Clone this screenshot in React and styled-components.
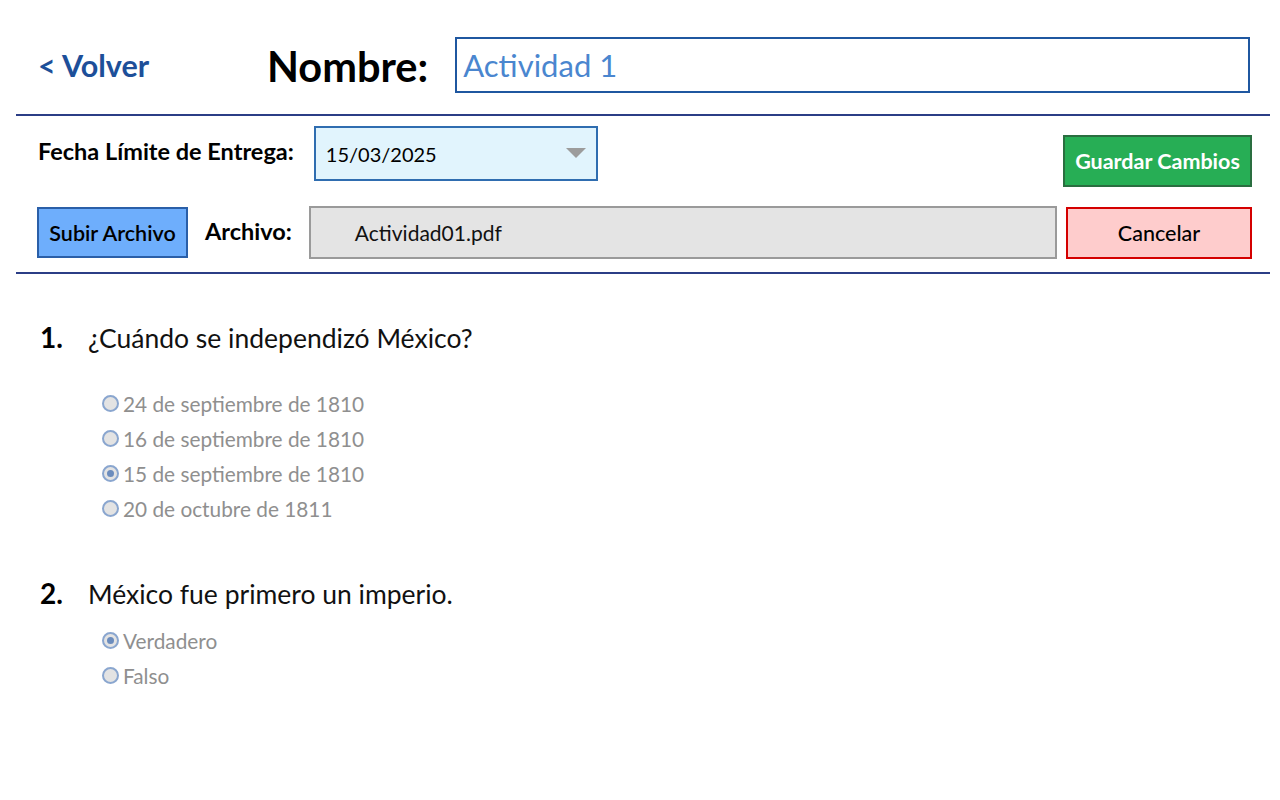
import React from 'react';
import styled, { createGlobalStyle } from 'styled-components';

const GlobalStyle = createGlobalStyle`
  body {
    margin: 0;
    background: #ffffff;
    font-family: Lato, "Noto Sans", "Liberation Sans", sans-serif;
  }
`;

const StyledPage = styled.div`
  padding: 0 10px 0 16px;
`;

const StyledHeader = styled.header`
  display: flex;
  align-items: center;
  padding: 37px 20px 21px 24px;
  border-bottom: 2px solid #2b3d86;
`;

const StyledBackLink = styled.a`
  width: 229px;
  margin-left: -2px;
  color: #1d4f99;
  font-size: 30.5px;
  font-weight: 700;
  text-decoration: none;
`;

const StyledNameLabel = styled.h1`
  margin: 0 27px 0 0;
  font-size: 41.5px;
  font-weight: 700;
  color: #000000;
  padding-top: 2px;
`;

const StyledNameInput = styled.div`
  flex: 1;
  height: 52px;
  border: 2px solid #1f57a0;
  padding-left: 6px;
  display: flex;
  align-items: center;
  color: #4a86cf;
  font-size: 31px;
`;

const StyledControls = styled.section`
  display: flex;
  flex-direction: column;
  gap: 19px;
  padding: 10px 18px 13px 21px;
  border-bottom: 2px solid #2b3d86;
`;

const StyledRow = styled.div`
  display: flex;
  align-items: ${({ $align }) => $align || 'center'};
`;

const StyledLabel = styled.span`
  font-size: 23.5px;
  font-weight: 700;
  color: #000000;
  margin: ${({ $margin }) => $margin || '0'};
  white-space: nowrap;
`;

const StyledDateSelect = styled.div`
  box-sizing: border-box;
  width: 284px;
  height: 55px;
  border: 2px solid #2f6db0;
  background: #e1f4fd;
  display: flex;
  align-items: center;
  justify-content: space-between;
  padding: 0 10px 0 10px;
  font-size: 20px;
  color: #000000;
`;

const StyledCaret = styled.span`
  width: 0;
  height: 0;
  border-left: 10px solid transparent;
  border-right: 10px solid transparent;
  border-top: 10px solid #9c9c9c;
  margin-top: -2px;
`;

const StyledSpacer = styled.div`
  flex: 1;
`;

const StyledButton = styled.button`
  box-sizing: border-box;
  height: ${({ $height }) => $height || '52px'};
  width: ${({ $width }) => $width};
  margin-top: ${({ $top }) => $top || '0'};
  background: ${({ $bg }) => $bg};
  border: 2px solid ${({ $border }) => $border};
  color: ${({ $color }) => $color || '#000000'};
  font-family: inherit;
  font-size: ${({ $size }) => $size || '21.5px'};
  font-weight: ${({ $weight }) => $weight || 700};
  padding: 0;
  cursor: pointer;
`;

const StyledFileBox = styled.div`
  flex: 1;
  box-sizing: border-box;
  height: 53px;
  margin: 0 9px 0 0;
  background: #e4e4e4;
  border: 2px solid #9a9a9a;
  display: flex;
  align-items: center;
  padding-left: 44px;
  font-size: 21px;
  color: #111111;
`;

const StyledQuestions = styled.section`
  padding: 46px 24px 0 24px;
`;

const StyledQuestion = styled.div`
  margin-bottom: 50px;
`;

const StyledQuestionTitle = styled.div`
  display: flex;
  align-items: baseline;
  line-height: 34px;
  margin-bottom: ${({ $gap }) => $gap};
`;

const StyledNumber = styled.span`
  width: 48px;
  font-size: 28px;
  font-weight: 700;
  color: #000000;
`;

const StyledQuestionText = styled.span`
  font-size: 26.5px;
  color: #111111;
`;

const StyledOption = styled.label`
  display: flex;
  align-items: center;
  height: 35px;
  padding-left: 62px;
  font-size: 20.8px;
  color: #8f8f8f;
`;

const StyledRadio = styled.span`
  box-sizing: border-box;
  width: 17px;
  height: 17px;
  border-radius: 50%;
  border: 2px solid #8aa6cf;
  background: #e3e3e3;
  margin-right: 4px;
  display: flex;
  align-items: center;
  justify-content: center;

  &::after {
    content: '';
    display: ${({ $checked }) => ($checked ? 'block' : 'none')};
    width: 7px;
    height: 7px;
    border-radius: 50%;
    background: #6b8cbd;
  }
`;

const questions = [
  {
    number: '1.',
    text: '¿Cuándo se independizó México?',
    gap: '31px',
    options: [
      { label: '24 de septiembre de 1810' },
      { label: '16 de septiembre de 1810' },
      { label: '15 de septiembre de 1810', checked: true },
      { label: '20 de octubre de 1811' },
    ],
  },
  {
    number: '2.',
    text: 'México fue primero un imperio.',
    gap: '12px',
    options: [
      { label: 'Verdadero', checked: true },
      { label: 'Falso' },
    ],
  },
];

function App() {
  return (
    <React.Fragment>
      <GlobalStyle />
      <StyledPage>
        <StyledHeader>
          <StyledBackLink href="#">&lt; Volver</StyledBackLink>
          <StyledNameLabel>Nombre:</StyledNameLabel>
          <StyledNameInput>Actividad 1</StyledNameInput>
        </StyledHeader>
        <StyledControls>
          <StyledRow $align="flex-start">
            <StyledLabel $margin="11px 20px 0 1px">Fecha Límite de Entrega:</StyledLabel>
            <StyledDateSelect>
              15/03/2025
              <StyledCaret />
            </StyledDateSelect>
            <StyledSpacer />
            <StyledButton
              $width="189px"
              $top="9px"
              $bg="#27ae55"
              $border="#2a6e40"
              $color="#ffffff"
            >
              Guardar Cambios
            </StyledButton>
          </StyledRow>
          <StyledRow>
            <StyledButton
              $width="151px"
              $height="51px"
              $bg="#6eaefc"
              $border="#2a5fa8"
              $weight={600}
            >
              Subir Archivo
            </StyledButton>
            <StyledLabel $margin="-4px 17px 0 17px">Archivo:</StyledLabel>
            <StyledFileBox>Actividad01.pdf</StyledFileBox>
            <StyledButton
              $width="186px"
              $bg="#fecccc"
              $border="#d40000"
              $weight={500}
            >
              Cancelar
            </StyledButton>
          </StyledRow>
        </StyledControls>
        <StyledQuestions>
          {questions.map((question) => (
            <StyledQuestion key={question.number}>
              <StyledQuestionTitle $gap={question.gap}>
                <StyledNumber>{question.number}</StyledNumber>
                <StyledQuestionText>{question.text}</StyledQuestionText>
              </StyledQuestionTitle>
              {question.options.map((option) => (
                <StyledOption key={option.label}>
                  <StyledRadio $checked={option.checked} />
                  {option.label}
                </StyledOption>
              ))}
            </StyledQuestion>
          ))}
        </StyledQuestions>
      </StyledPage>
    </React.Fragment>
  );
}

export default App;
